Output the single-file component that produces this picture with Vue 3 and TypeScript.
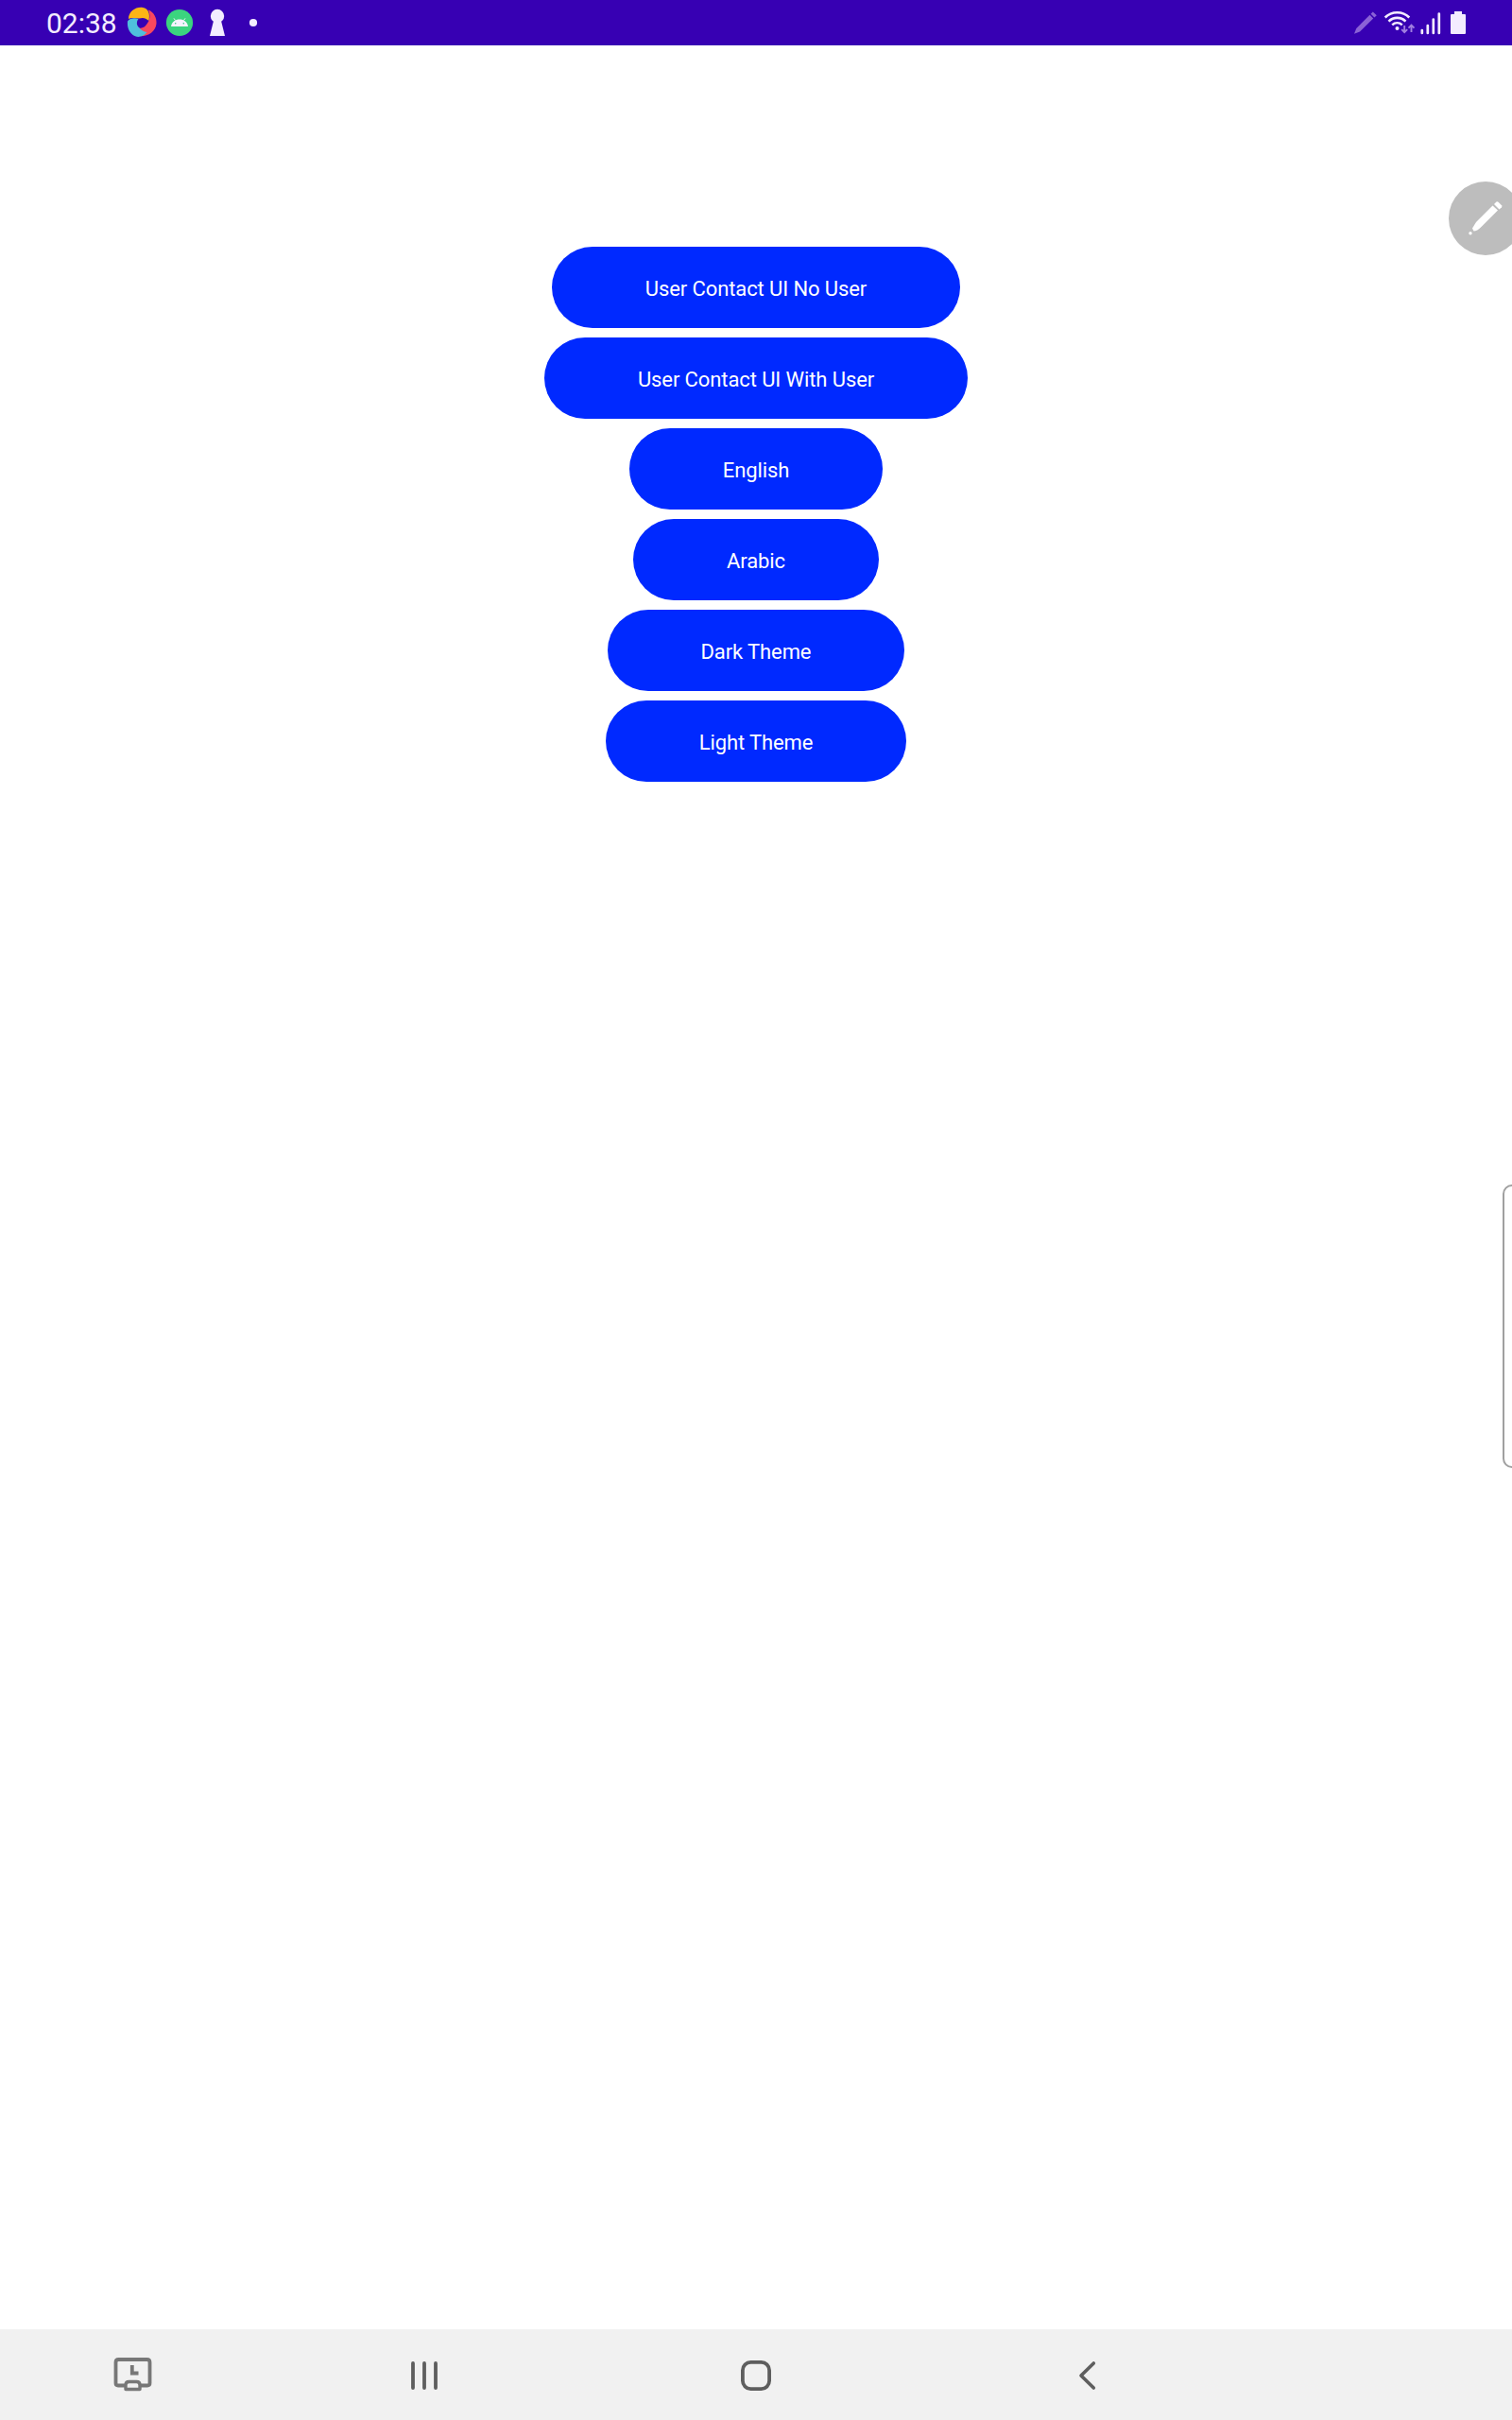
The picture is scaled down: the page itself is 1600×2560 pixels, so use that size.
<script setup lang="ts">
interface Action {
  label: string
}

const actions: Action[] = [
  { label: 'User Contact UI No User' },
  { label: 'User Contact UI With User' },
  { label: 'English' },
  { label: 'Arabic' },
  { label: 'Dark Theme' },
  { label: 'Light Theme' },
]
</script>

<template>
  <div class="screen">
    <header class="status-bar">
      <span class="clock">02:38</span>
      <svg class="icon" width="40" height="48" viewBox="130 0 40 48">
        <path d="M136 20C136 12 144 7 151 8C157 9 159 14 157.500 22C154 18.500 151 18.500 147 19.500C143 19 139 18.500 136 20Z" fill="#fdb515" />
        <path d="M157 10.500C163 13 166 19 165.500 25C164.500 34 156 39 147 38C146 34 146 31.500 147 29.500C152 30.500 155 27 157.500 22C159 17.500 158.500 14 157 10.500Z" fill="#f9485d" />
        <path d="M135 22.500C137.500 19 142 18.500 146.500 20C144 23.500 144.500 27 147.500 29.500C149.500 32 152 33.500 155.500 34C151.500 39.500 144.500 40.500 140 36.500C136 33 134.500 28 135 22.500Z" fill="#4fbfdc" />
      </svg>
      <svg class="icon" width="40" height="48" viewBox="170 0 40 48">
        <circle cx="190" cy="24" r="14.100" fill="#3bd47f" />
        <path d="M185.400 21.400L184 19.400M194.600 21.400L196 19.400" stroke="#f3effc" stroke-width="1" fill="none" />
        <path d="M181 28C181.700 23 185.500 20.500 190 20.500S198.300 23 199 28Z" fill="#f6f3ff" />
        <circle cx="185.700" cy="24.800" r=".8" fill="#3bc47f" />
        <circle cx="194.300" cy="24.800" r=".8" fill="#3bc47f" />
      </svg>
      <svg class="icon" width="40" height="48" viewBox="210 0 40 48">
        <circle cx="230" cy="17" r="7.200" fill="#f3ecff" />
        <path d="M226.500 20H233.500L238 38H222Z" fill="#f3ecff" />
      </svg>
      <svg class="icon" width="36" height="48" viewBox="250 0 36 48">
        <circle cx="268" cy="24" r="4.100" fill="#f3ecff" />
      </svg>
      <span class="spacer"></span>
      <svg class="icon" width="32" height="48" viewBox="1430 0 32 48">
        <g fill="#8b62d6">
          <path d="M1433 35.700L1435.300 30L1449.500 15.800L1453.200 19.500L1439 33.500Z" />
          <path d="M1450.600 14.700L1452.800 12.500L1456.800 16.300L1454.400 18.500Z" />
        </g>
      </svg>
      <svg class="icon" width="38" height="48" viewBox="1462 0 38 48">
        <g fill="none" stroke="#f3ecff" stroke-width="2.600">
          <path d="M1465.700 18.500C1472.500 11.500 1484.500 11.500 1491.300 18.500" />
          <path d="M1469.500 22.600C1474.500 17.600 1482.500 17.600 1487.500 22.600" />
          <path d="M1473.200 26.400C1476.300 23.600 1480.700 23.600 1483.800 26.400" />
        </g>
        <circle cx="1478.500" cy="30" r="2" fill="#f3ecff" />
        <g fill="none" stroke="#a17fe0" stroke-width="1.900">
          <path d="M1486.200 27V34M1483.200 31.200L1486.200 34.200L1489.200 31.200" />
          <path d="M1493.500 34V27M1490.500 29.600L1493.500 26.600L1496.500 29.600" />
        </g>
      </svg>
      <svg class="icon" width="30" height="48" viewBox="1500 0 30 48">
        <path d="M1504.800 32V35M1510.800 27V35M1516.800 20.500V35M1522.800 14.500V35" stroke="#f3ecff" stroke-width="2.700" stroke-linecap="round" />
      </svg>
      <svg class="icon" width="26" height="48" viewBox="1530 0 26 48">
        <path d="M1539 12H1547V15H1550Q1551 15 1551 16V35Q1551 36 1550 36H1536Q1535 36 1535 35V16Q1535 15 1536 15H1539Z" fill="#f3ecff" />
      </svg>
    </header>

    <main class="content">
      <button v-for="action in actions" :key="action.label" class="action" type="button">
        {{ action.label }}
      </button>
    </main>

    <nav class="nav-bar">
      <svg class="icon" width="280" height="96" viewBox="0 2464 280 96">
        <g fill="none" stroke="#777" stroke-width="3.800">
          <path d="M133 2523.500H125Q122.500 2523.500 122.500 2521V2499Q122.500 2496 125.500 2496H155.500Q158.500 2496 158.500 2499V2521Q158.500 2523.500 156 2523.500H148.500" />
          <path d="M133 2527.500V2523Q133 2519.500 136.500 2519.500H144.500Q148 2519.500 148 2523V2527.500Z" stroke-width="3.400" stroke-linejoin="round" />
          <path d="M139.800 2502V2510.500H146.500" />
        </g>
      </svg>
      <svg class="icon" width="338" height="96" viewBox="280 2464 338 96">
        <path d="M437 2500V2526M449 2500V2526M461 2500V2526" stroke="#5e5e5e" stroke-width="3.800" stroke-linecap="round" />
      </svg>
      <svg class="icon" width="364" height="96" viewBox="618 2464 364 96">
        <rect x="785.900" y="2498.900" width="28.200" height="28.200" rx="8.500" fill="none" stroke="#5e5e5e" stroke-width="3.800" />
      </svg>
      <svg class="icon" width="338" height="96" viewBox="982 2464 338 96">
        <path d="M1157.300 2500L1144 2513L1157.300 2526" fill="none" stroke="#5e5e5e" stroke-width="3.600" stroke-linecap="round" stroke-linejoin="round" />
      </svg>
    </nav>

    <div class="pen-bubble">
      <svg class="icon" width="78" height="78" viewBox="1533 192 78 78">
        <g fill="#fff">
          <path d="M1558 241.500L1562 235L1579.500 217.500L1585 222.500L1567.500 240Q1563 244.500 1559.500 244.500Z" />
          <path d="M1581 216L1583.500 213.500Q1584.500 212.800 1585.500 213.700L1589 217.300Q1589.800 218.300 1589 219.300L1586.500 221.500Z" />
          <circle cx="1556" cy="246.700" r="1.700" />
        </g>
      </svg>
    </div>
    <div class="edge-panel"></div>
  </div>
</template>

<style>
body {
  margin: 0;
}
</style>

<style scoped>
.screen {
  position: relative;
  display: flex;
  flex-direction: column;
  width: 1600px;
  height: 2560px;
  overflow: hidden;
  background: #fff;
  font-family: Roboto, sans-serif;
}

.icon {
  display: block;
  flex: none;
}

.status-bar {
  display: flex;
  align-items: center;
  box-sizing: border-box;
  height: 48px;
  padding: 0 44px 0 49px;
  background: #3700b3;
}

.clock {
  width: 81px;
  padding-top: 1px;
  color: #f3ecff;
  font-size: 30px;
  line-height: 48px;
  white-space: nowrap;
}

.spacer {
  flex: 1;
}

.content {
  display: flex;
  flex: 1;
  flex-direction: column;
  align-items: center;
  gap: 10px;
  padding-top: 213px;
}

.action {
  height: 86px;
  padding: 4px 99px 0;
  border: 0;
  border-radius: 43px;
  background: #0029ff;
  color: #fff;
  font-family: inherit;
  font-size: 22px;
  letter-spacing: -0.1px;
  line-height: 26px;
  white-space: nowrap;
}

.nav-bar {
  display: flex;
  height: 96px;
  background: #f1f1f1;
}

.pen-bubble {
  position: absolute;
  top: 192px;
  left: 1533px;
  width: 78px;
  height: 78px;
  border-radius: 50%;
  background: #bdbdbd;
}

.edge-panel {
  position: absolute;
  top: 1253px;
  left: 1590px;
  box-sizing: border-box;
  width: 40px;
  height: 300px;
  border: 2px solid #a0a0a0;
  border-radius: 10px;
  background: #fff;
}
</style>
